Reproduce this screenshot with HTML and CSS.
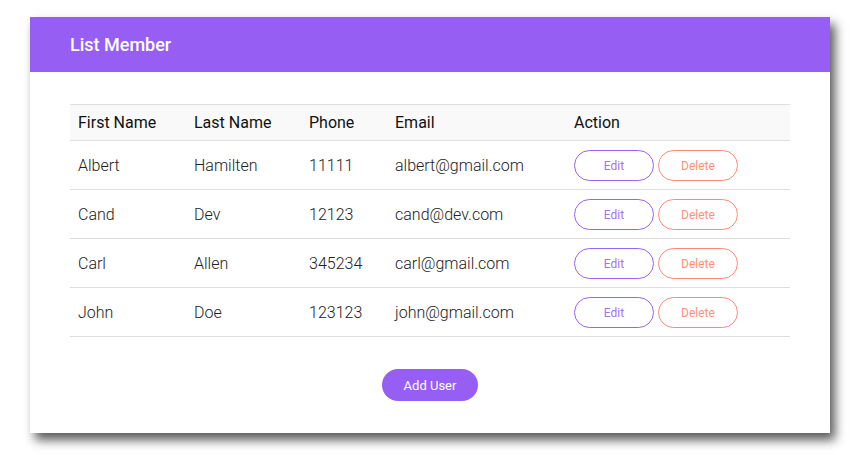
FILE: index.html
```html
<!DOCTYPE html>
<html>
<head>
<meta charset="utf-8">
<link rel="stylesheet" href="styles.css">
</head>
<body>
<div class="card">
  <div class="card-header">List Member</div>
  <div class="card-body">
    <table class="members">
      <colgroup>
        <col class="c1"><col class="c2"><col class="c3"><col class="c4"><col class="c5">
      </colgroup>
      <thead>
        <tr><th>First Name</th><th>Last Name</th><th>Phone</th><th>Email</th><th>Action</th></tr>
      </thead>
      <tbody>
        <tr><td>Albert</td><td>Hamilten</td><td>11111</td><td>albert@gmail.com</td><td><div class="actions"><button class="btn-edit">Edit</button><button class="btn-delete">Delete</button></div></td></tr>
        <tr><td>Cand</td><td>Dev</td><td>12123</td><td>cand@dev.com</td><td><div class="actions"><button class="btn-edit">Edit</button><button class="btn-delete">Delete</button></div></td></tr>
        <tr><td>Carl</td><td>Allen</td><td>345234</td><td>carl@gmail.com</td><td><div class="actions"><button class="btn-edit">Edit</button><button class="btn-delete">Delete</button></div></td></tr>
        <tr><td>John</td><td>Doe</td><td>123123</td><td>john@gmail.com</td><td><div class="actions"><button class="btn-edit">Edit</button><button class="btn-delete">Delete</button></div></td></tr>
      </tbody>
    </table>
    <div class="footer"><button class="btn-add">Add User</button></div>
  </div>
</div>
</body>
</html>
```
FILE: styles.css
```css
* { box-sizing: border-box; }
html, body { margin: 0; padding: 0; background: #fff; }
body {
  font-family: Roboto, "Liberation Sans", sans-serif;
  padding: 17px 31px 22px 30px;
}
.card {
  width: 800px;
  height: 416px;
  background: #fff;
  box-shadow: 5px 7px 10px rgba(0,0,0,0.65);
}
.card-header {
  height: 55px;
  background: #975ef4;
  color: #fff;
  font-size: 18px;
  font-weight: 500;
  line-height: 55px;
  padding-left: 40px;
}
.card-body {
  padding: 32px 40px 0 40px;
}
.members {
  width: 720px;
  border-collapse: collapse;
  table-layout: fixed;
}
.c1 { width: 116px; }
.c2 { width: 115px; }
.c3 { width: 86px; }
.c4 { width: 179px; }
.c5 { width: 224px; }
.members th {
  text-align: left;
  font-weight: 400;
  font-size: 16px;
  color: #111;
  background: #f9f9f9;
  height: 36px;
  padding: 0 8px;
  border-top: 1px solid #dedede;
  border-bottom: 1px solid #dedede;
}
.members td {
  font-size: 16px;
  font-weight: 300;
  color: #222;
  height: 49px;
  padding: 0 8px;
  border-bottom: 1px solid #dedede;
}
.actions { display: flex; gap: 4px; }
.actions button {
  width: 80px;
  height: 31px;
  border-radius: 16px;
  background: #fff;
  font-family: Roboto, "Liberation Sans", sans-serif;
  font-size: 12px;
  font-weight: 400;
  padding: 1px 0 0;
}
.btn-edit { border: 1px solid #9a62f2; color: #a472f0; }
.btn-delete { border: 1px solid #ff8a73; color: #ff8f78; }
.footer {
  display: flex;
  justify-content: center;
  padding-top: 32px;
}
.btn-add {
  width: 96px;
  height: 32px;
  border: none;
  border-radius: 16px;
  background: #975ef4;
  color: #fff;
  font-family: Roboto, "Liberation Sans", sans-serif;
  font-size: 13px;
  padding: 0;
}
```
